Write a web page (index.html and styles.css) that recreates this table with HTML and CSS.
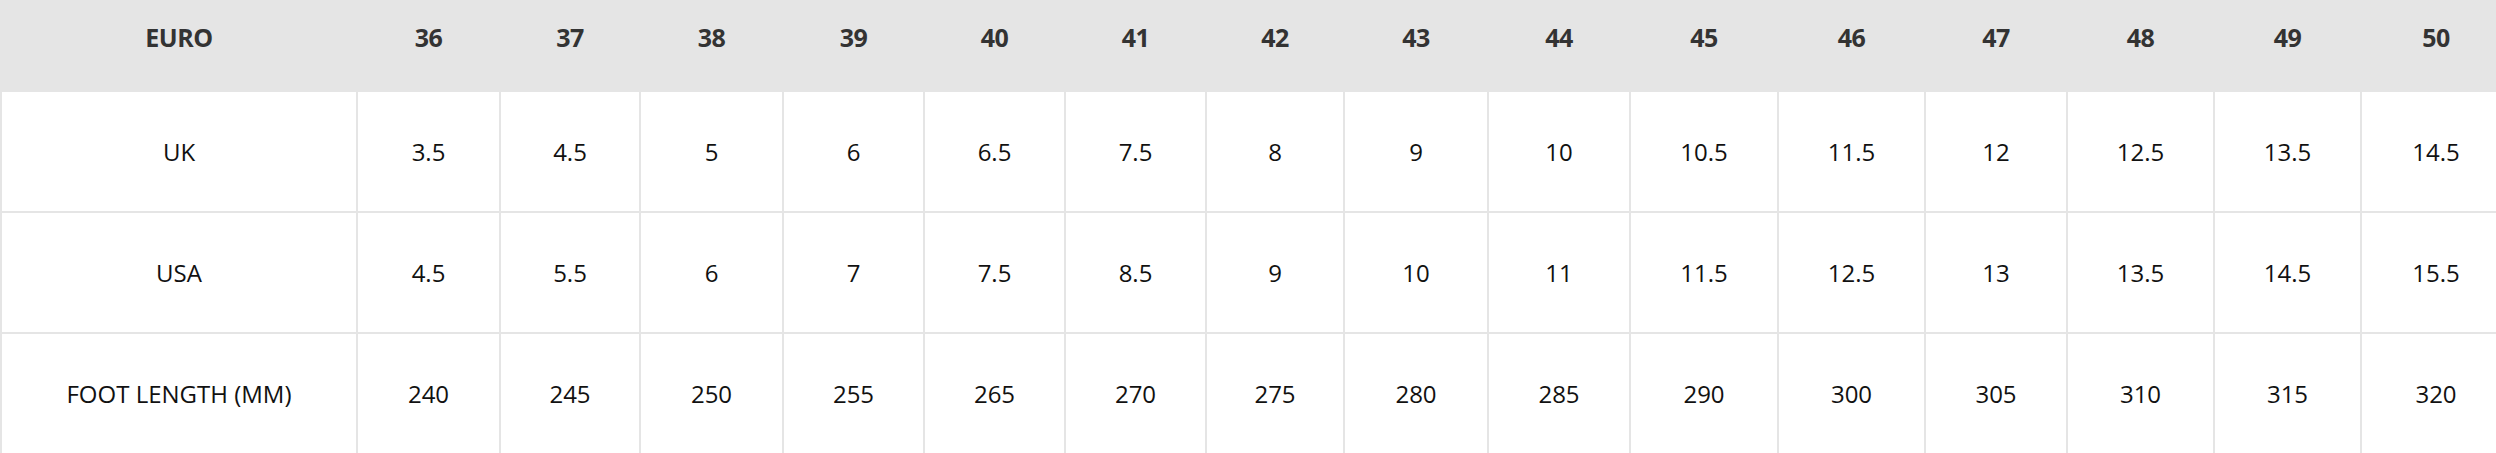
FILE: index.html
```html
<!DOCTYPE html>
<html lang="en">
<head>
<meta charset="utf-8">
<title>Size chart</title>
<link rel="stylesheet" href="styles.css">
</head>
<body>
<div class="size-chart">
  <table class="size-table">
    <colgroup>
      <col class="c-label"><col><col><col><col><col><col><col><col><col><col><col><col><col><col><col>
    </colgroup>
    <thead>
      <tr>
        <th>EURO</th><th>36</th><th>37</th><th>38</th><th>39</th><th>40</th><th>41</th><th>42</th><th>43</th><th>44</th><th>45</th><th>46</th><th>47</th><th>48</th><th>49</th><th>50</th>
      </tr>
    </thead>
    <tbody>
      <tr>
        <td>UK</td><td>3.5</td><td>4.5</td><td>5</td><td>6</td><td>6.5</td><td>7.5</td><td>8</td><td>9</td><td>10</td><td>10.5</td><td>11.5</td><td>12</td><td>12.5</td><td>13.5</td><td>14.5</td>
      </tr>
      <tr>
        <td>USA</td><td>4.5</td><td>5.5</td><td>6</td><td>7</td><td>7.5</td><td>8.5</td><td>9</td><td>10</td><td>11</td><td>11.5</td><td>12.5</td><td>13</td><td>13.5</td><td>14.5</td><td>15.5</td>
      </tr>
      <tr>
        <td>FOOT LENGTH (MM)</td><td>240</td><td>245</td><td>250</td><td>255</td><td>265</td><td>270</td><td>275</td><td>280</td><td>285</td><td>290</td><td>300</td><td>305</td><td>310</td><td>315</td><td>320</td>
      </tr>
    </tbody>
  </table>
</div>
</body>
</html>
```

FILE: styles.css
```css
html, body {
  margin: 0;
  padding: 0;
  background: #ffffff;
  overflow: hidden;
}

.size-chart {
  width: 100%;
  overflow: hidden;
}

.size-table {
  border-collapse: collapse;
  table-layout: fixed;
  width: 2510px;
  font-family: "Open Sans", "Noto Sans", sans-serif;
  font-size: 24px;
  color: #111111;
}

.size-table col { width: 142px; }
.size-table col:nth-child(1) { width: 356px; }
.size-table col:nth-child(2) { width: 143px; }
.size-table col:nth-child(3) { width: 140px; }
.size-table col:nth-child(4) { width: 143px; }
.size-table col:nth-child(5) { width: 141px; }
.size-table col:nth-child(6) { width: 141px; }
.size-table col:nth-child(7) { width: 141px; }
.size-table col:nth-child(8) { width: 138px; }
.size-table col:nth-child(9) { width: 144px; }
.size-table col:nth-child(10) { width: 142px; }
.size-table col:nth-child(11) { width: 148px; }
.size-table col:nth-child(12) { width: 147px; }
.size-table col:nth-child(13) { width: 142px; }
.size-table col:nth-child(14) { width: 147px; }
.size-table col:nth-child(15) { width: 147px; }
.size-table col:nth-child(16) { width: 150px; }

.size-table th,
.size-table td {
  border: 2px solid #e5e5e5;
  text-align: center;
  padding: 0 4px;
  line-height: 32px;
}

.size-table thead tr {
  height: 90px;
}

.size-table th {
  background: #e5e5e5;
  color: #333333;
  font-size: 25px;
  font-weight: 700;
  letter-spacing: -0.5px;
  vertical-align: top;
  padding-top: 19px;
}

.size-table tbody tr {
  height: 121px;
}

.size-table td {
  vertical-align: middle;
  font-weight: 400;
}
```
